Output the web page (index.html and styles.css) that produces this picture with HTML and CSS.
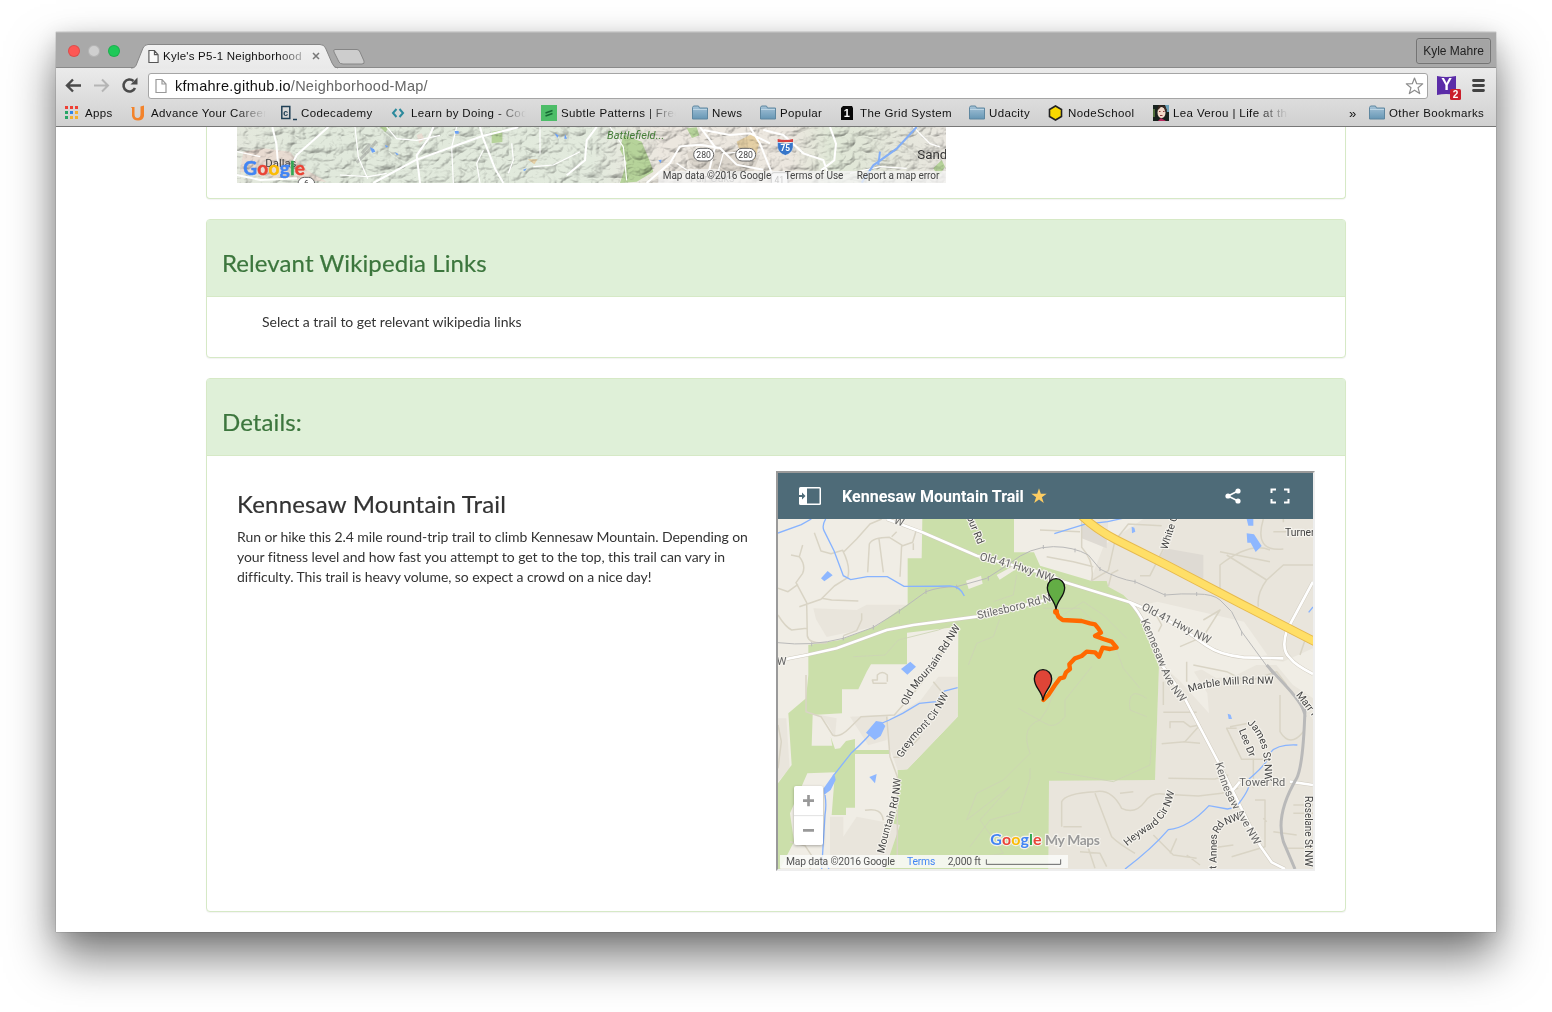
FILE: index.html
```html
<!DOCTYPE html>
<html lang="en">
<head>
<meta charset="utf-8">
<title>Kyle's P5-1 Neighborhood Map</title>
<link rel="stylesheet" href="styles.css">
</head>
<body>
<svg width="0" height="0" class="defs" aria-hidden="true">
  <defs>
    <linearGradient id="fold" x1="0" y1="0" x2="0" y2="1"><stop offset="0" stop-color="#a5c3d8"/><stop offset="1" stop-color="#6797b5"/></linearGradient>
    <linearGradient id="tabfill" x1="0" y1="0" x2="0" y2="1"><stop offset="0" stop-color="#f1f1f1"/><stop offset="1" stop-color="#e9e9e9"/></linearGradient>
    <symbol id="folder" viewBox="0 0 16 16"><path d="M.5 14V2.500l1-1.500h5l1 2h8v11z" fill="url(#fold)" stroke="#5f87a0"/><path d="M1 4.500h14" stroke="#bcd5e4"/></symbol>
    <symbol id="page" viewBox="0 0 12 16"><path d="M1 1.500h6L11 6v8.500H1z M7 1.500V6h4" fill="#fff" fill-opacity=".7" stroke="currentColor" stroke-width="1.200"/></symbol>
  </defs>
</svg>
<div class="window">
  <div class="tabstrip">
    <div class="lights"><i class="red"></i><i class="grey"></i><i class="green"></i></div>
    <div class="tab">
      <svg class="tabshape" width="236" height="25" viewBox="0 0 236 25"><path d="M0 24.500C4 24 5 22 6 19L12 4Q13.500.500 17 .500H189Q193 .500 194.500 4L201 19Q203 24.500 207 24.500z" fill="url(#tabfill)"/><path d="M0 24C4 24 5 22 6 19L12 4Q13.500.500 17 .500H189Q193 .500 194.500 4L201 19Q203 24 207 24" fill="none" stroke="#868686"/><path d="M204 5.500H226Q228 5.500 229 8L233 17Q234 20 231 20H212Q209 20 208 18L203 8Q202 5.500 204 5.500z" fill="#cdcdcd" stroke="#868686"/></svg>
      <div class="tabrow">
        <svg class="tabicon" width="11" height="15"><use href="#page"/></svg>
        <span class="tabtitle">Kyle's P5-1 Neighborhood</span>
        <svg width="8" height="8" viewBox="0 0 8 8"><path d="M1 1l6 6M7 1L1 7" stroke="#777" stroke-width="1.500"/></svg>
      </div>
    </div>
    <div class="profile">Kyle Mahre</div>
  </div>
  <div class="chrome">
    <div class="toolbar">
      <svg class="nav" width="74" height="18" viewBox="0 0 74 18"><path d="M17 9.500H4M9 3.500L3 9.500l6 6" fill="none" stroke="#4a4a4a" stroke-width="2.400"/><path d="M30 9.500h13M38 3.500l6 6-6 6" fill="none" stroke="#b5b5b5" stroke-width="2"/><path d="M71 12A6 6 0 1 1 69.500 5" fill="none" stroke="#4a4a4a" stroke-width="2.600"/><path d="M73.500 1.500V8.500H66.500z" fill="#4a4a4a"/></svg>
      <div class="url">
        <svg class="urlicon" width="12" height="16"><use href="#page"/></svg>
        <span class="address">kfmahre.github.io<em>/Neighborhood-Map/</em></span>
        <svg class="favstar" width="20" height="20" viewBox="0 0 20 20"><path d="M10.500 2l2.200 5.700 6 .200-4.700 3.800 1.700 5.900-5.200-3.400-5.200 3.400L7 11.700 2.300 7.900l6-.200z" fill="none" stroke="#8c8c8c" stroke-width="1.200" stroke-linejoin="round"/></svg>
      </div>
      <svg class="ext" width="52" height="24" viewBox="0 0 52 24"><path d="M1 3q9 2 19 0v19q-10-2-19 0z" fill="#5b2ca8"/><text x="10.500" y="17" class="ytxt">Y</text><rect x="14" y="16" width="11" height="11" rx="1.500" fill="#ca1f2b"/><text x="19.500" y="25" class="badge">2</text><path d="M37.500 7.500h10M37.500 12.500h10M37.500 17.500h10" stroke="#434343" stroke-width="2.800" stroke-linecap="round"/></svg>
    </div>
    <div class="bookmarks">
      <div class="bm apps"><svg width="16" height="16" viewBox="0 0 16 16"><path d="M0 2.500h3M5 2.500h3M10 2.500h3" stroke="#ee4035" stroke-width="3"/><path d="M0 7.500h3M0 12.500h3" stroke="#28a565" stroke-width="3"/><path d="M5 7.500h3" stroke="#2d85e8" stroke-width="3"/><path d="M10 7.500h3M10 12.500h3M5 12.500h3" stroke="#f4b02e" stroke-width="3"/></svg><span>Apps</span></div>
      <div class="bm career"><svg width="16" height="16" viewBox="0 0 16 16"><path d="M-.500 2H3.500v7q0 4 3 4t3-4V1.500L13 .500V11q-1 4.500-6 4.500T1 11V3z" fill="#f3832b"/></svg><span class="fade">Advance Your Career</span></div>
      <div class="bm code"><svg width="16" height="16" viewBox="0 0 16 16"><path d="M.800 1.500h8v12h-8zM12 14.500h4" fill="none" stroke="#204056" stroke-width="1.500"/><text x="4.900" y="10.500" class="ccicon">c</text></svg><span>Codecademy</span></div>
      <div class="bm learn"><svg width="16" height="16" viewBox="0 0 16 16"><path d="M5.500 4L2 8l3.500 4M8.500 4L12 8l-3.500 4" fill="none" stroke="#2b899c" stroke-width="2"/></svg><span class="fade">Learn by Doing - Code</span></div>
      <div class="bm subtle"><svg width="16" height="16" viewBox="0 0 16 16"><path fill="#4dbd68" d="M0 0h16v16H0z"/><path d="M4.500 8l7-2.500M4.500 11l7-2.500" stroke="#176a35" stroke-width="1.500"/></svg><span class="fade">Subtle Patterns | Free</span></div>
      <div class="bm news"><svg width="16" height="16"><use href="#folder"/></svg><span>News</span></div>
      <div class="bm popular"><svg width="16" height="16"><use href="#folder"/></svg><span>Popular</span></div>
      <div class="bm grid"><svg width="16" height="16" viewBox="0 0 16 16"><path d="M3 1h9l1 2v12H1V3z" fill="#080808"/><text x="7" y="12" class="oneicon">1</text></svg><span>The Grid System</span></div>
      <div class="bm udacity"><svg width="16" height="16"><use href="#folder"/></svg><span>Udacity</span></div>
      <div class="bm node"><svg width="16" height="16" viewBox="0 0 16 16"><path d="M7.500 1l6 3.500v7l-6 3.500-6-3.500v-7z" fill="#f8d900" stroke="#222" stroke-width="1.600"/></svg><span>NodeSchool</span></div>
      <div class="bm lea"><svg width="16" height="16" viewBox="0 0 16 16"><path fill="#18221e" d="M0 0h16v16H0z"/><path fill="#6fa2b9" d="M12 0h4v7h-2z"/><path fill="#4e6d3a" d="M0 4h2v8H0z"/><ellipse cx="8.500" cy="7.500" rx="4" ry="5.500" fill="#f4dacb"/><path d="M4 5Q7 4 8 1q4 1 4 6l2-2-2-4-6-1z" fill="#3b2820"/><path d="M7 10.500h2.500M6 6.500h1.500M10 6.500h1.500" stroke="#8d3f3e"/><path d="M5 16l3-3 5 3z" fill="#b7285d"/></svg><span class="fade">Lea Verou | Life at the</span></div>
      <div class="more">»</div>
      <div class="bm other"><svg width="16" height="16"><use href="#folder"/></svg><span>Other Bookmarks</span></div>
    </div>
  </div>
  <main class="page">
    <section class="panel first">
      <svg class="terrain" width="709" height="56" viewBox="111 21 2127 168">
        <defs>
          <filter id="relief" x="0" y="0" width="100%" height="100%"><feTurbulence type="turbulence" baseFrequency=".014 .02" numOctaves="4" seed="12"/><feDiffuseLighting surfaceScale="15" diffuseConstant="1.120" lighting-color="#fff"><feDistantLight azimuth="225" elevation="63"/></feDiffuseLighting></filter>
          <linearGradient id="land"><stop offset="0" stop-color="#e4e8dd"/><stop offset=".1" stop-color="#e1e9dc"/><stop offset=".5" stop-color="#e2eadd"/><stop offset=".6" stop-color="#ece7df"/><stop offset=".78" stop-color="#ece7df"/><stop offset=".84" stop-color="#dfe7d6"/><stop offset="1" stop-color="#e9e6df"/></linearGradient>
        </defs>
        <path fill="url(#land)" d="M111 21h2127v168H111z"/>
        <path d="M130 95l60-10 80 10 40 50 70 40-150-10-110-20zM650 45l15-5 8 18-15 12z" fill="#ead8d0" opacity=".8"/>
        <path d="M1460 95l120-10 100 20-20 50-150 5-40-30z" fill="#dbd5cc"/>
        <path d="M1270 45l55 20 25 60 10 30-50 30-50 4 20-60-20-40zM875 35l32-5v36l-32 4zM540 21h28l-12 16zM1460 25l30-3 8 24-22 8zM2200 145l25-25 10 20-20 30z" fill="#b6d39a"/>
        <path d="M1610 65l50-25 20 20-15 60-40-10zM983 118l30 0-10 15z" fill="#e5d0a5"/>
        <path d="M111 21h2127v168H111z" filter="url(#relief)" class="shade"/>
        <path d="M470 128l35-35 25-30M485 100l25-28" stroke="#777" stroke-width="9" opacity=".35"/>
        <g fill="none" stroke="#fff" stroke-width="6">
          <path d="M217 21l12 50 5 60M385 21L290 105l-15 30M700 21l-15 35-35 50 10 83M520 189l125-68 200-72 110-27M840 21l10 35 35 90 25 43M111 165l70 15 110-5M1190 21l-30 40-5 60-55 45M1340 189l70-60 30-50 60-5 60 10 50 50 80 15M1500 21l45 60-20 80M1650 21l30 50 40 100M1690 30l60 15 60 55 60 20 15 45M1890 21l18 50-5 50-40 30M1510 30l80 15 60-5 60 30"/>
          <path d="M465 21l10 90 28 65M560 21l30 35 60 5 70-15M1020 21v80M850 90l-20 40 10 59M1000 140l60-5 80-40M935 70l5 50-15 40M770 21l-15 60 5 108M1430 130l30 20 100 0M1950 160l90-20 80 5M2140 21l50 50 30 10M1550 170l20-70 70-5M1230 21l40 60 10 100M111 95l70 15M420 165l85 5 55-10" stroke-width="3.500"/>
        </g>
        <path d="M2150 21l-60 65-70 50-35 52M2035 135l5-40" fill="none" stroke="#82aef7" stroke-width="6"/>
        <g fill="#69a0f7"><path d="M510 82l12 5 4 8-10 3zM764 33h12v8h-10zM1064 40l12 6-4 8zM1095 42l6 14-8 0zM968 150l12-5-5 8zM584 97l12 5-5 4zM1375 121l10-2-3 10zM555 75l10 4-7 4z"/></g>
        <g class="maptext"><text x="196" y="140" font-size="34">Dallas</text><text x="2152" y="117" font-size="40" fill="#333">Sandy</text><text x="1245" y="22" class="park">National</text><text x="1221" y="56" class="park" textLength="172">Battlefield...</text><text x="1470" y="187" font-size="32" fill="#777">Fair Oaks</text></g>
        <g class="shield"><rect x="1481" y="85" width="60" height="38" rx="19"/><text x="1511" y="114">280</text><rect x="1607" y="85" width="60" height="38" rx="19"/><text x="1637" y="114">280</text><rect x="294" y="172" width="50" height="38" rx="19"/><text x="319" y="200">6</text><rect x="1714" y="158" width="50" height="38" rx="8"/><text x="1738" y="188">41</text></g>
        <path d="M1733 67q23 8 46 0v15q-2 17-23 24-21-7-23-24z" fill="#3675c9" stroke="#fff"/><path d="M1733 57q23 6 46 0v9h-46z" fill="#d43f40"/><text x="1756" y="94" class="i75">75</text>
        <path d="M1375 153h863v36h-863z" fill="#f5f5f5" opacity=".75"/>
        <text class="logo" x="130" y="165" textLength="185" font-size="57"><tspan fill="#4285f4" stroke="#4285f4">G</tspan><tspan fill="#ea4335" stroke="#ea4335">o</tspan><tspan fill="#fbbc05" stroke="#fbbc05">o</tspan><tspan fill="#4285f4" stroke="#4285f4">g</tspan><tspan fill="#34a853" stroke="#34a853">l</tspan><tspan fill="#ea4335" stroke="#ea4335">e</tspan></text>
        <g class="maptext" font-size="30"><text x="1388" y="177" textLength="326">Map data ©2016 Google</text><text x="1754" y="177" textLength="176">Terms of Use</text><text x="1970" y="177" textLength="248">Report a map error</text></g>
      </svg>
    </section>
    <section class="panel">
      <header><h3>Relevant Wikipedia Links</h3></header>
      <div class="body"><ul><li>Select a trail to get relevant wikipedia links</li></ul></div>
    </section>
    <section class="panel">
      <header><h3>Details:</h3></header>
      <div class="body details">
        <div class="copy">
          <h3>Kennesaw Mountain Trail</h3>
          <p>Run or hike this 2.4 mile round-trip trail to climb Kennesaw Mountain. Depending on your fitness level and how fast you attempt to get to the top, this trail can vary in difficulty. This trail is heavy volume, so expect a crowd on a nice day!</p>
        </div>
        <div class="frame">
          <div class="maphead">
            <svg width="22" height="18" viewBox="0 0 22 18"><rect width="22" height="18" rx="1.500" fill="#fff"/><path d="M8 1.500h12.500v15H8z" fill="#4e6b78"/><path d="M0 8h3V5.500L6.500 9 3 12.500V10H0z" fill="#4e6b78"/></svg>
            <span class="maptitle">Kennesaw Mountain Trail</span>
            <svg class="gold" width="16" height="16" viewBox="0 0 16 16"><path d="M8 .300l1.800 5.500h5.900l-4.800 3.500 1.900 5.700L8 11.500 3.200 15l1.900-5.700L.300 5.800h5.900z" fill="#fdcd62"/></svg>
            <svg class="share" width="16" height="16" viewBox="0 0 16 16"><path d="M13 3L3 8l10 5" fill="none" stroke="#fff" stroke-width="1.600"/><g fill="#fff"><circle cx="13" cy="3" r="2.600"/><circle cx="3" cy="8" r="2.600"/><circle cx="13" cy="13" r="2.600"/></g></svg>
            <svg width="20" height="16" viewBox="0 0 20 16"><path d="M1.500 5V1.500H6M14 1.500h4.500V5M18.500 11v3.500H14M6 14.500H1.500V11" fill="none" stroke="#fff" stroke-width="2"/></svg>
          </div>
          <svg class="trailmap" width="535" height="350" viewBox="24 162 1605 1050">
            <path fill="#f0ede5" d="M24 162h1605v1050H24z"/>
            <g fill="#e9e5dc">
              <path d="M1120 162h509v1050H835V945l320 0 12-350 60 50 90 100-5-60-40-65 100-30 120-20-70-100-260-60-90 20-120-60 50-130zM940 162l75 0-5 90-75-40z"/>
              <path d="M130 430l130 5 30-16h120l-90 65-150 32-32-53z"/><path d="M24 760l25 0 10 150-35 40z"/>
            </g>
            <path d="M1629 550l-90 40-150-20-110-30-40 40 100 60 60-10 60-30 60 0 50 60 60 40z" fill="#f0ede5"/>
            <path d="M935 175l75 45v30l-75-30zM1185 250l115 20v70l-30 15-110-60z" fill="#dedad3"/>
            <path fill="#cbdfaa" d="M457 162h275v100l60 0 18 40 155 46h45l5 17 45 25 25 25 35 60 45 85 2 40-12 345-318 2-2 265H24V955l41-55-10-155 53-45 7-70v-90l95-15 110-42 65-47 28-18V280h42z"/>
            <path fill="#f0ede5" d="M411 503l154-18-2 270-151 158-29 2 2 85-40 212H30l42-82-12-85 52-120 83-3-10 128h43v-22h27V867h103v-12H255v-33l-27 6-18 22-15 2-13-37 5 27h-62l3-92 88-5v-72h49l25-53 13-22h108z"/>
            <path d="M505 635l58 0v120L412 913l-29 2-30-85 0-65 100-60zM240 755l115-5-5 75-55 16zM180 1055h40v60l40-60 130 25-45 132H180zM150 750l50 10-5 55-20-35z" fill="#e9e5dc"/>
            <path d="M588 347l45-15 5 24-42 16zM680 330l55-30 4 12-50 32z" fill="#f0ede5"/>
            <g fill="none" stroke="#d9d4c5" stroke-width="4.500" stroke-linejoin="round">
              <path d="M133 203l20 55 30 8 35-10q25 50 15 82l-40 25-40 40-65 22M220 262l40-40 40-45 35-15M293 322l5-85q10-20 60-20l40 25 30-10 12-40M365 215l15-15M327 222l13 100M395 240l-5 95M430 235v20M98 240l-10 35-25-5M88 275q20 25 10 50l-20 28 32 60 2 100q5 25 60 20M24 370l30 10 30-22M155 400l30 5 80 3M110 490l-45 5q-20-10-41-45M275 445v20l-15 32-40 15"/>
              <path d="M108 630v110l45 15 35 55q20 10 50-20l35-35 100-5 70-80 75-110M563 485l-70 100M350 755l10 120 22 60 0 270M24 780l10 50-10 80M352 650v-20q-15-15-30 0v15l-15 0 3 10 40 0M285 1036q50-10 55 30M490 650l25 30M370 877h20l60-60M60 1130l45 12 20 30-5 40"/>
              <path d="M935 162v85q40 45 30 100l50-30 20-90 40-50 100 5M810 195l120 5M1110 332l30 0 45-90M830 275l80 15 60 15M1015 365l10-40 20-10M1350 380l0-80q90-70 150-45M1500 290l-150-30M1370 270l120 75 50-45h90M1490 345q-30 40-25 80M1480 162q-30 100 60 90M1510 200h100M1540 162v10M1570 500l40 10-20 60M1300 465l50-30-50 80-70 30M1150 435l25 45-10 20M1250 590l0 60"/>
              <path d="M1180 742h100M1200 790l0-20h40l20 15 30-5-45 50-70 6M1240 830l50 5M1180 650v70M1195 940l140 2 40-12M875 1085V1010q10-25 100-30 50-10 80 50 40 20 70-20 20-30 60-22l100 5 70-8 50-15M880 1085l55 0M975 985l50 130q20 20 70 50M1050 985l40-5M1400 790l-30 0 45 93 65 0M1380 785l55-10M1450 880v90M1530 690v110q30 50 70 0M1455 1005l30 0v140l-100 30M1270 600l100 20 60 30 90-30 30 40M1570 1020h60M1570 1045h60M1550 1150h80M1510 1100l70 10M955 1150l20 60M1150 1110l60 60 70 10M1220 1120l-20 45M1250 1170l40 30M1320 1150l70-10M1480 1060l10 10M930 1160l60 5 20 40"/>
            </g>
            <g fill="none" stroke="#ccd4b4" stroke-width="2.500"><path d="M565 470l-60 25-120 30-40 45-95 5M740 330l-10 60-60 20M595 600l25-65 50-20 20-55M870 640l-40 95-20 30q-60 20-30 100l-80 80-80 40-30 80 130-100-90 100 70 100-100 15M745 730l80 45q30 20 60-20l0-50 80-100M1130 700q-60-40-50 35l50 20M1145 820l-5 80-110 50-170-30M780 910l0 30-30 100-90 25-60 80M880 450l60-40 60 40 70 70M820 430l110 0 100 100 30 80 50 60"/></g>
            <g fill="none" stroke="#d1ccc0" stroke-width="11"><path d="M350 162l107 40 163 70 220 58 45 22 195 60q90 35 180 95l50 35q40 28 110 35l120 3"/><path d="M24 587l86-17 90-20 150-55 80-15 190-25 200-48M1080 412q45 45 90 180l70 100 100 190 130 260 35 50 40 20M1629 350l-78 145q-20 60 10 85 15 20 68 47M1385 980l25-30M1560 950l69 10"/></g>
            <g fill="none" stroke="#fff" stroke-width="8"><path d="M350 162l107 40 163 70 220 58 45 22 195 60q90 35 180 95l50 35q40 28 110 35l120 3"/><path d="M24 587l86-17 90-20 150-55 80-15 190-25 200-48M1080 412q45 45 90 180l70 100 100 190 130 260 35 50 40 20M1385 980l25-30M1560 950l69 10"/><path d="M1629 350l-78 145q-20 60 10 85 15 20 68 47"/></g>
            <g fill="none" stroke="#b9b9b9" stroke-width="3"><path d="M24 533q100 12 196-13l90-33 75-47 83-60q40-15 92-15l90-25 70-45q60-50 130-50 60 0 105 25l35 42q55 30 105 38l90 40q50-5 95-3 50 0 70 18l35 35 30 60 95 130"/><path d="M1490 600l60 65q55 60 55 90M1605 730q-5 170-25 210-65 110-40 190l35 82" stroke-width="9"/><path d="M125 532v12M220 514v12M310 480v14M388 432v14M468 373v14M560 359v14M655 333v14M720 289v14M820 240v12M915 250v12M990 306v12M1095 344v12M1185 384v12M1280 381v12M1415 498v14"/></g>
            <g fill="none" stroke="#87b3ff" stroke-width="4"><path d="M24 204l70-25 30-17M167 162q-12 20-5 35l30 60 28 75 22 12 50-9h60l50 29q60 0 138-1 30 0 43 30M853 206l90-28 70-8 45-10M188 935l55-70q50-45 80-85l35-15 40-20 50-30 50-5 25-32 40-10M165 990q5 30 0 60l-10 162M165 1190l12 22M1065 1212q80-60 130-118 60-5 122-72l55 10 25-5q50-60 40-85 60-50 65-80 20-25 80-22M1616 442l13-16"/></g>
            <g fill="#8eb7ff"><path d="M153 340l20-22 15 13-25 18zM393 612l28-22 17 15-26 24zM288 803l30-35 18 3 10 12-14 30-18 12zM161 970l32-45 4 20-15 30-20 15zM298 936l22-9-5 28zM1085 185l8 3 3 12-10 5zM1430 162h20v20h-15zM1430 205l22 3 23 35-18 18-15-28-10 0zM1373 746l9 3 4 13-10 0z"/></g>
            <path d="M930 147q45 45 110 78l150 75 220 115 240 123" fill="none" stroke="#e6b94e" stroke-width="27"/><path d="M930 147q45 45 110 78l150 75 220 115 240 123" fill="none" stroke="#ffdf67" stroke-width="21"/>
            <g class="roads">
              <path id="p1" d="M628 285q110 23 235 73"/><path id="p2" d="M624 462q120-25 255-64"/><path id="p3" d="M1113 433l225 115"/><path id="p4" d="M1112 468q30 65 65 155 25 65 80 110"/><path id="p5" d="M411 723q25-60 80-110 30-45 80-125"/><path id="p6" d="M397 880q25-50 80-100 30-30 60-95"/><path id="p7" d="M1258 682q80-30 260-25"/><path id="p8" d="M1336 895q20 90 75 170l62 110"/><path id="p9" d="M342 1166q10-50 30-110 20-60 20-135"/><path id="p10" d="M1072 1144q40-35 80-57 50-40 64-120"/><path id="p11" d="M1337 1212L1338 1160Q1340 1140 1352 1122L1362 1100Q1375 1082 1430 1070"/><path id="p12" d="M1431 775q62 50 52 190"/>
            </g>
            <g class="maptext roadtext">
              <text><textPath href="#p1">Old 41 Hwy NW</textPath></text><text><textPath href="#p2">Stilesboro Rd NW</textPath></text><text><textPath href="#p3">Old 41 Hwy NW</textPath></text><text><textPath href="#p4">Kennesaw Ave NW</textPath></text><text class="dark"><textPath href="#p5">Old Mountain Rd NW</textPath></text><text class="dark"><textPath href="#p6">Greymont Cir NW</textPath></text><text class="dark"><textPath href="#p7">Marble Mill Rd NW</textPath></text><text><textPath href="#p8">Kennesaw Ave NW</textPath></text><text class="dark"><textPath href="#p9">Mountain Rd NW</textPath></text><text class="dark"><textPath href="#p10">Heyward Cir NW</textPath></text>
              <text class="dark" transform="translate(1339 1212) rotate(-89)">t Annes</text><text class="dark" transform="translate(1344 1107) rotate(-57)">Rd</text><text class="dark" transform="translate(1368 1080) rotate(-22)" textLength="48" lengthAdjust="spacingAndGlyphs">NW</text>
              <text class="dark"><textPath href="#p12">James St NW</textPath></text>
              <text x="1408" y="962">Tower Rd</text><text class="dark" x="1545" y="214">Turner</text><text class="dark" transform="translate(1192 255) rotate(-73)">White Cir</text><text class="dark" transform="translate(590 156) rotate(68)">our Rd</text><text x="370" y="175" transform="rotate(20 370 175)">W</text><text class="dark" transform="translate(1406 796) rotate(68)">Lee Dr</text><text class="dark" transform="translate(1605 993) rotate(90)" textLength="212">Roselane St NW</text><text class="dark" transform="translate(1577 690) rotate(52)">Marr Rd</text><text x="20" y="600">W</text>
            </g>
            <path d="M858 438L865 455 878 465 935 468 960 475 975 478 985 490 993 503 975 513 1000 522 1025 530 1040 548 1020 552 998 548 987 575 975 562 950 560 935 573 915 580 898 598 900 612 888 622 882 637 870 640 855 660 835 690 820 705" fill="none" stroke="#ff6900" stroke-width="13" stroke-linejoin="round" stroke-linecap="round"/>
            <circle cx="858" cy="440" r="9" fill="#ff6900"/>
            <g stroke="#111" stroke-width="4"><path d="M858 433C855 405 832 395 832 368a26 27 0 0 1 52 0C884 395 861 405 858 433z" fill="#63ad45"/><path d="M819 706C816 678 793 668 793 641a26 27 0 0 1 52 0C845 668 822 678 819 706z" fill="#df4537"/></g>
            <text class="logo halo" x="661" y="1141" textLength="154" font-size="48"><tspan fill="#4285f4">G</tspan><tspan fill="#ea4335">o</tspan><tspan fill="#fbbc05">o</tspan><tspan fill="#4285f4">g</tspan><tspan fill="#34a853">l</tspan><tspan fill="#ea4335">e</tspan></text><text class="mymaps halo" x="825" y="1141" textLength="165">My Maps</text>
            <path d="M30 1170h864v39H30z" fill="#fafaf8" opacity=".87"/>
            <g class="maptext" font-size="31"><text x="48" y="1200" textLength="327" fill="#555">Map data ©2016 Google</text><text x="411" y="1200" textLength="85" class="terms">Terms</text><text x="533" y="1200" textLength="100" fill="#555">2,000 ft</text></g><path d="M649 1183v15h223v-15" fill="none" stroke="#666" stroke-width="3"/>
            <g class="zoomer"><rect x="72" y="963" width="87" height="177" rx="6" fill="#fff"/><path d="M72 1052h87" stroke="#e1e1e1" stroke-width="3"/><path d="M99 1007h33M115.500 990v34M99 1096h33" stroke="#999" stroke-width="8"/></g>
          </svg>
        </div>
      </div>
    </section>
  </main>
</div>
</body>
</html>
```
FILE: styles.css
```css
*{box-sizing:border-box}
body{margin:0;padding:32px 56px 80px;background:#fff;height:1012px;overflow:hidden;font-family:Lato,sans-serif;color:#333}
.defs{position:absolute}
svg{display:block;flex:none}
.window{width:1440px;height:900px;background:#fff;overflow:hidden;display:flex;flex-direction:column;box-shadow:0 0 1px rgba(0,0,0,.5),0 25px 44px rgba(0,0,0,.52),0 4px 20px rgba(0,0,0,.12)}
.tabstrip{height:36px;flex:none;background:#a9a9a9;display:flex;border-bottom:1px solid #8a8a8a;border-top:1px solid #b8b8b8;font-family:"Liberation Sans",sans-serif}
.lights{display:flex;gap:8px;padding:12px 0 0 12px;width:75px}
.lights i{width:12px;height:12px;border-radius:50%;box-shadow:inset 0 0 0 1px rgba(0,0,0,.12)}
.red{background:#fd5754}.grey{background:#cfcfcf}.green{background:#1ec958}
.tab{position:relative;width:236px;height:36px;padding-top:11px}
.tabshape{position:absolute;left:0;top:11px}
.tabrow{position:relative;display:flex;align-items:center;height:24px;padding-left:17px}
.tabicon{color:#555}
.tabtitle{font-size:11.5px;letter-spacing:.23px;color:#111;width:140px;margin:0 9px 0 4px;white-space:nowrap;overflow:hidden;-webkit-mask-image:linear-gradient(90deg,#000 82%,rgba(0,0,0,.25))}
.profile{margin:5px 5px 0 auto;width:75px;height:26px;border:1px solid #747474;border-radius:3px;text-align:center;line-height:25px;font-size:12px;color:#222;background:#a4a4a4;box-shadow:inset 0 0 1px #ccc}
.chrome{height:59px;flex:none;background:linear-gradient(#ebebeb,#d0d0d0);border-bottom:1px solid #777;font-family:"Liberation Sans",sans-serif}
.toolbar{height:32px;padding:5px 0 0 8px;display:flex}
.nav{margin-top:3px;overflow:visible}
.url{display:flex;align-items:center;width:1280px;height:26px;margin-left:10px;padding:0 3px 0 6px;background:#fff;border:1px solid #a5a5a5;border-radius:3px}
.urlicon{color:#999}
.address{margin-left:8px;font-size:14.5px;color:#111;letter-spacing:.27px;white-space:nowrap}
.address em{font-style:normal;color:#666}
.favstar{margin-left:auto}
.ext{margin-left:8px;overflow:visible}
.ytxt{font:bold 16px "Liberation Sans",sans-serif;fill:#fff;text-anchor:middle}
.badge{font:bold 10px "Liberation Sans",sans-serif;fill:#fff;text-anchor:middle}
.bookmarks{height:26px;padding-left:9px;display:flex;align-items:center;font-size:11.5px;letter-spacing:.38px;color:#111;white-space:nowrap}
.bm{display:flex;align-items:center;gap:4px;flex:none}
.bm span{overflow:hidden;line-height:16px}
.fade{width:115px;-webkit-mask-image:linear-gradient(90deg,#000 74%,transparent)}
.apps{width:66px}.career{width:150px}.code{width:110px}.learn{width:150px}.subtle{width:151px}.news{width:68px}.popular{width:80px}.grid{width:129px}.udacity{width:79px}.node{width:105px}.lea{width:196px}
.more{width:20px;font-size:13px}
.ccicon{font:bold 9px "Liberation Mono",monospace;fill:#204056;text-anchor:middle}
.oneicon{font:bold 11px "Liberation Sans",sans-serif;fill:#fff;text-anchor:middle}
.page{padding:0 150px;flex:1;min-height:0}
.panel{border:1px solid #d6e9c6;border-radius:4px;margin:0 0 20px;background:#fff;box-shadow:0 1px 1px rgba(0,0,0,.05)}
.first{height:72px;border-top:0;border-radius:0 0 4px 4px;padding-left:30px}
.panel header{height:77px;padding:30px 15px 20px;background:#dff0d8;border-bottom:1px solid #d6e9c6;color:#3c763d}
h3{margin:0;font-size:24px;font-weight:400;line-height:26px;letter-spacing:.09px;-webkit-text-stroke:.2px currentColor}
.body{padding:15px;font-size:14px;line-height:20px;height:60px;letter-spacing:-.02px}
.body ul{margin:0 0 10px;padding:0 0 0 40px;list-style:none}
.details{display:grid;grid-template-columns:554px 539px;height:455px}
.copy{padding:20px 10px 0 15px}
.copy h3{margin-bottom:10px;letter-spacing:.2px}
.copy p{margin:0;letter-spacing:-.07px}
.frame{height:400px;border:2px solid;border-color:#9a9a9a #eee #eee #9a9a9a;overflow:hidden;letter-spacing:0}
.maphead{height:46px;background:#4e6b78;display:flex;align-items:center;padding:0 23px 0 21px}
.maptitle{font:bold 16px Roboto,sans-serif;color:#fff;margin:0 7px 0 21px;width:182px;white-space:nowrap;letter-spacing:.02px}
.share{margin:0 29px 0 auto}
.shade{mix-blend-mode:multiply;opacity:.7}
.maptext{font-family:Roboto,sans-serif;fill:#444}
.park{font-style:italic;font-size:33px;fill:#437c36}
.shield rect{fill:#fff;stroke:#666;stroke-width:3}
.shield text{font:26px Roboto,sans-serif;text-anchor:middle;fill:#444}
.i75{font:bold 25px Roboto,sans-serif;fill:#fff;text-anchor:middle}
.logo{font-family:Lato,sans-serif;font-weight:bold;stroke-width:1.5px}
.halo{paint-order:stroke;stroke:#f4f2ec;stroke-width:7px}
.mymaps{font:bold 42px Lato,sans-serif;fill:#999}
.roads path{fill:none}
.roadtext text{font-size:33px;fill:#666;stroke:#f5f3ed;stroke-width:7px;paint-order:stroke;stroke-linejoin:round}
.roadtext .dark{fill:#444;font-size:31px}
.terms{fill:#4285f4}
.zoomer{filter:drop-shadow(0 3px 4px rgba(0,0,0,.3))}
```
